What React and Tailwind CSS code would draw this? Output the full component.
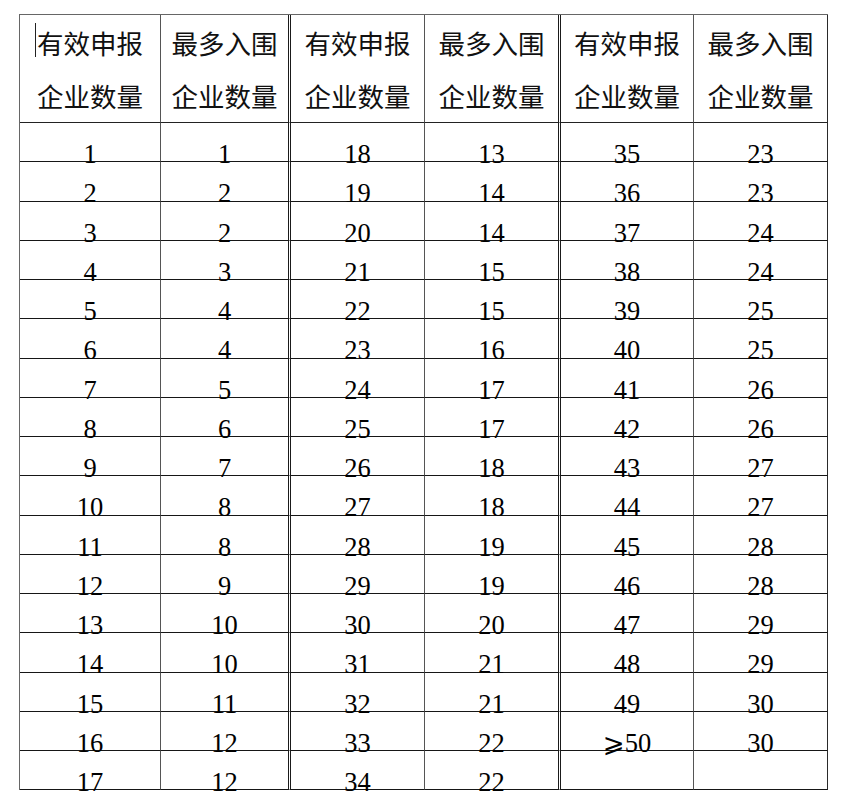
import React from 'react'

const col1 = Array.from({ length: 17 }, (_, i) => String(i + 1))
const col2 = ['1', '2', '2', '3', '4', '4', '5', '6', '7', '8', '8', '9', '10', '10', '11', '12', '12']
const col3 = Array.from({ length: 17 }, (_, i) => String(i + 18))
const col4 = ['13', '14', '14', '15', '15', '16', '17', '17', '18', '18', '19', '19', '20', '21', '21', '22', '22']
const col5 = [...Array.from({ length: 15 }, (_, i) => String(i + 35)), 'GE50', '']
const col6 = ['23', '23', '24', '24', '25', '25', '26', '26', '27', '27', '28', '28', '29', '29', '30', '30', '']

const rows = col1.map((_, i) => [col1[i], col2[i], col3[i], col4[i], col5[i], col6[i]])

// 第2、4列右侧是双线
const cellBorder = [
  'border-r border-r-[#555]',
  'border-r-[3px] border-double border-r-[#1a1a1a]',
  'border-r border-r-[#555]',
  'border-r-[3px] border-double border-r-[#1a1a1a]',
  'border-r border-r-[#555]',
  'border-r border-r-[#2a2a2a]',
]

function Num({ value }) {
  if (value === 'GE50') {
    return (
      <span>
        <span className="font-['DejaVu_Sans',sans-serif] text-[26px]">⩾</span>50
      </span>
    )
  }
  return <span>{value}</span>
}

export default function App() {
  return (
    <div className="w-[844px] h-[795px] bg-white pt-[14px] pl-[19px] overflow-hidden">
      <div className="grid grid-cols-[141px_130px_134px_136px_133px_134px] w-[809px] border-l border-t border-[#666]">
        {[0, 1, 2, 3, 4, 5].map((c) => (
          <div
            key={'h' + c}
            className={`h-[108px] flex flex-col items-center justify-center border-b border-b-[#222] ${cellBorder[c]} font-['Noto_Sans_CJK_SC',sans-serif] text-[26.5px] leading-[53px] text-[#111] pt-[1px]`}
          >
            <span className="relative">
              {c === 0 && <span className="absolute left-[-2px] top-[7px] w-px h-[34px] bg-[#222]" />}
              {c % 2 === 0 ? '有效申报' : '最多入围'}
            </span>
            <span>企业数量</span>
          </div>
        ))}
        {rows.map((r, i) =>
          r.map((v, c) => (
            <div
              key={i + '-' + c}
              className={`h-[39.25px] border-b border-b-[#161616] ${cellBorder[c]} text-center font-['Liberation_Serif',serif] text-[26.5px] leading-[26px] pt-[18px] text-black`}
            >
              <Num value={v} />
            </div>
          ))
        )}
      </div>
    </div>
  )
}
